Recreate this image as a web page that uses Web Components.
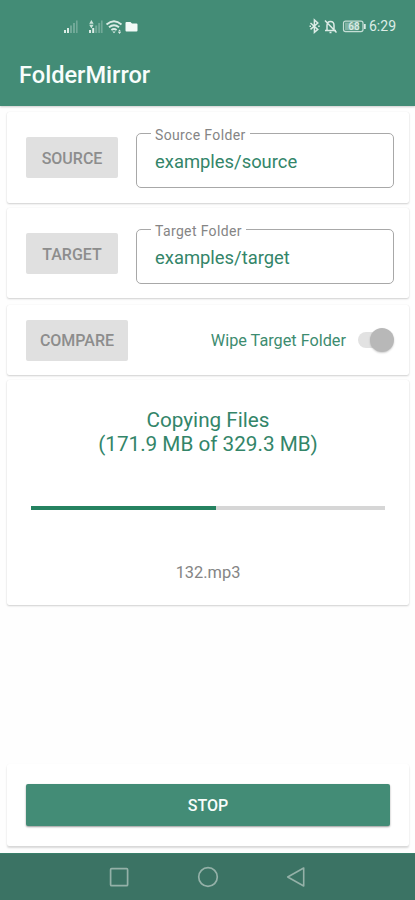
<!DOCTYPE html>
<html lang="en"><head><meta charset="utf-8"><title>FolderMirror</title>
<style>
html,body{margin:0;height:100%}
body{background:#fefefe;font-family:Roboto,"Noto Sans",sans-serif;overflow:hidden}
</style></head><body>
<mirror-app></mirror-app>
<script>
const define=(name,html)=>{
  const t=document.createElement('template');t.innerHTML=html;
  customElements.define(name,class extends HTMLElement{
    constructor(){super();this.attachShadow({mode:'open'}).append(t.content.cloneNode(true));}
  });
};
define('status-bar',`<style>
:host{display:flex;height:53px;box-sizing:border-box;padding:0 19px 1px 62px;align-items:center;color:#dcece6;font-size:14px}
svg{display:block}.gap{flex:1}span{line-height:16px;letter-spacing:0;margin-left:2px}
</style>
<svg width="78" height="20" viewBox="0 0 78 20" fill="currentColor">
<g><rect x="2" y="14" width="2" height="3"/><rect x="5" y="12" width="2" height="5"/><g opacity=".3"><rect x="8" y="9.5" width="2" height="7.5"/><rect x="11" y="7" width="2" height="10"/><rect x="14" y="4.500" width="1.600" height="12.500"/></g></g>
<g><path d="M27.200 7.800l2.200-3.800 2.200 3.800zM27.200 8.800l2.200 3.600 2.200-3.600z" opacity=".9"/><rect x="27" y="14" width="2" height="3"/><rect x="30.200" y="12" width="2" height="5"/><g opacity=".3"><rect x="33.200" y="9.500" width="2" height="7.500"/><rect x="36.200" y="7" width="2" height="10"/><rect x="39" y="4.500" width="1.600" height="12.500"/></g></g>
<g fill="none" stroke="currentColor" stroke-width="1.900"><path d="M44.500 8.500Q52 2 59.500 8.500M47 11.300q5-4.200 10 0M49.400 14q2.600-2 5.200 0"/></g><path d="M50.300 15.400h3.400L52 17.300zM56 15.500l1.500-2 1.500 2zM56 16l1.500 2 1.500-2z"/>
<path d="M64.500 6h4l1.500 1.600h4.500q1 0 1 1v6q0 1-1 1h-10q-1 0-1-1V7q0-1 1-1z" fill="#f2faf7"/>
</svg><div class="gap"></div>
<svg width="58" height="20" viewBox="0 0 58 20" fill="none" stroke="currentColor" stroke-width="1.500">
<path d="M1.500 7l7.300 6.400-3.400 3V4l3.400 3-7.300 6.400M.5 10.200h1.500M9.200 10.200h1.500"/>
<path d="M16 14.500h11M18 14V9.500Q18 5.500 21.500 5.500T25 9.500V14M20.500 16.500h2M16 4.500l11.500 12"/>
<rect x="34.500" y="5.200" width="19.500" height="10.400" rx="2" stroke-width="1.200" opacity=".85"/><rect x="36" y="6.500" width="13.500" height="7.800" fill="currentColor" opacity=".4" stroke="none"/><path d="M55.800 8v5" stroke-width="1.800"/>
<text x="45" y="14" text-anchor="middle" font-size="10" font-weight="500" fill="currentColor" stroke="none">68</text>
</svg><span>6:29</span>`);
define('app-header',`<style>
:host{display:block;height:106px;background:#438c76;box-shadow:0 1px 2px #0003}
h1{margin:0;padding:0 19px;height:44px;line-height:44px;font-size:23.6px;font-weight:500;color:#f8fdfb}
</style><status-bar></status-bar><h1><slot></slot></h1>`);
define('app-card',`<style>
:host{display:flex;box-sizing:border-box;background:#fff;border-radius:2px;box-shadow:0 1px 2px #0000002e,0 0 1px #00000018}
</style><slot></slot>`);
define('app-button',`<style>
:host{display:flex;align-items:center;justify-content:center;height:41px;border-radius:2px;background:#e0e0e0;color:#8d8d8d;font-size:16px;font-weight:500;flex:none}
:host([primary]){background:#438c76;color:#f8fdfb;flex:1;height:42px;box-shadow:0 1px 2px #0006}
span{margin-top:1px}
:host([primary]) span{margin-top:0}
</style><span><slot></slot></span>`);
define('outlined-field',`<style>
:host{display:flex;position:relative;box-sizing:border-box;width:258px;height:55px;border:1px solid #a8a8a8;border-radius:5px;align-items:center;padding:1px 18px 0;color:#338569;font-size:18.4px}
.label{position:absolute;left:14px;top:-8px;padding:0 4px;background:#fff;color:#858585;font-size:14px;line-height:18px;letter-spacing:.36px;white-space:nowrap}
</style><span class="label"><slot name="label"></slot></span><slot></slot>`);
define('toggle-switch',`<style>
:host{display:flex;width:37px;height:26px;align-items:center}
.track{width:30px;height:16px;border-radius:8px;background:#e2e2e2;display:flex;align-items:center;padding-left:12px;box-sizing:border-box}
.thumb{width:24px;height:24px;border-radius:50%;background:#b8b8b8;box-shadow:0 1px 2px #0003;flex:none}
</style><div class="track"><div class="thumb"></div></div>`);
define('progress-line',`<style>
:host{display:flex;height:4px;background:#d6d6d6}.fill{width:185px;background:#258260}
</style><div class="fill"></div>`);
define('nav-bar',`<style>
:host{display:flex;height:47px;background:#3b7364;border-top:1px solid #3a806b;box-sizing:border-box;justify-content:center;gap:65px;color:#94b1a8}
svg{display:block;margin-top:11px}
</style>
<svg width="24" height="24" viewBox="0 0 24 24" fill="none" stroke="currentColor" stroke-width="1.700"><rect x="3.600" y="3.700" width="17" height="17" rx="1"/></svg>
<svg width="24" height="24" viewBox="0 0 24 24" fill="none" stroke="currentColor" stroke-width="1.700"><circle cx="12" cy="12" r="9.300"/></svg>
<svg width="24" height="24" viewBox="0 0 24 24" fill="none" stroke="currentColor" stroke-width="1.600" stroke-linejoin="round"><path d="M18.700 3v18L2.700 12z"/></svg>`);
define('mirror-app',`<style>
:host{display:flex;flex-direction:column;height:900px;width:415px}
main{flex:1;display:flex;flex-direction:column;padding:6px 6px 7px 7px}
app-card{padding:0 14px 0 19px}
.row{align-items:flex-start;gap:18px}
.row app-button{width:92px;margin-top:25px}
.row outlined-field{margin-top:21px}
.a{height:91px;margin-bottom:5px}.b{height:90px;margin-bottom:7px}
.c{height:70px;align-items:center;margin-bottom:5px}
.c app-button{width:102px}
.wipe{margin-left:auto;margin-right:12px;font-size:16.250px;color:#3d8c70}
.p{height:225px;flex-direction:column;padding:28px 24px 0;color:#338569;text-align:center}
.p .t{font-size:20.700px;line-height:24px}
.p progress-line{margin-top:50px}
.p .f{color:#858585;font-size:16.400px;line-height:20px;margin-top:53px}
.s{height:82px;margin-top:auto;padding:20px 19px 0;align-items:flex-start;box-shadow:0 2px 2px #00000026,0 0 1px #00000010}
</style>
<app-header>FolderMirror</app-header>
<main>
<app-card class="row a"><app-button>SOURCE</app-button><outlined-field><span slot="label">Source Folder</span><span>examples/source</span></outlined-field></app-card>
<app-card class="row b"><app-button>TARGET</app-button><outlined-field><span slot="label">Target Folder</span><span>examples/target</span></outlined-field></app-card>
<app-card class="c"><app-button>COMPARE</app-button><span class="wipe">Wipe Target Folder</span><toggle-switch></toggle-switch></app-card>
<app-card class="p"><div class="t">Copying Files<br>(171.9 MB of 329.3 MB)</div><progress-line></progress-line><div class="f">132.mp3</div></app-card>
<app-card class="s"><app-button primary>STOP</app-button></app-card>
</main>
<nav-bar></nav-bar>`);
</script></body></html>
